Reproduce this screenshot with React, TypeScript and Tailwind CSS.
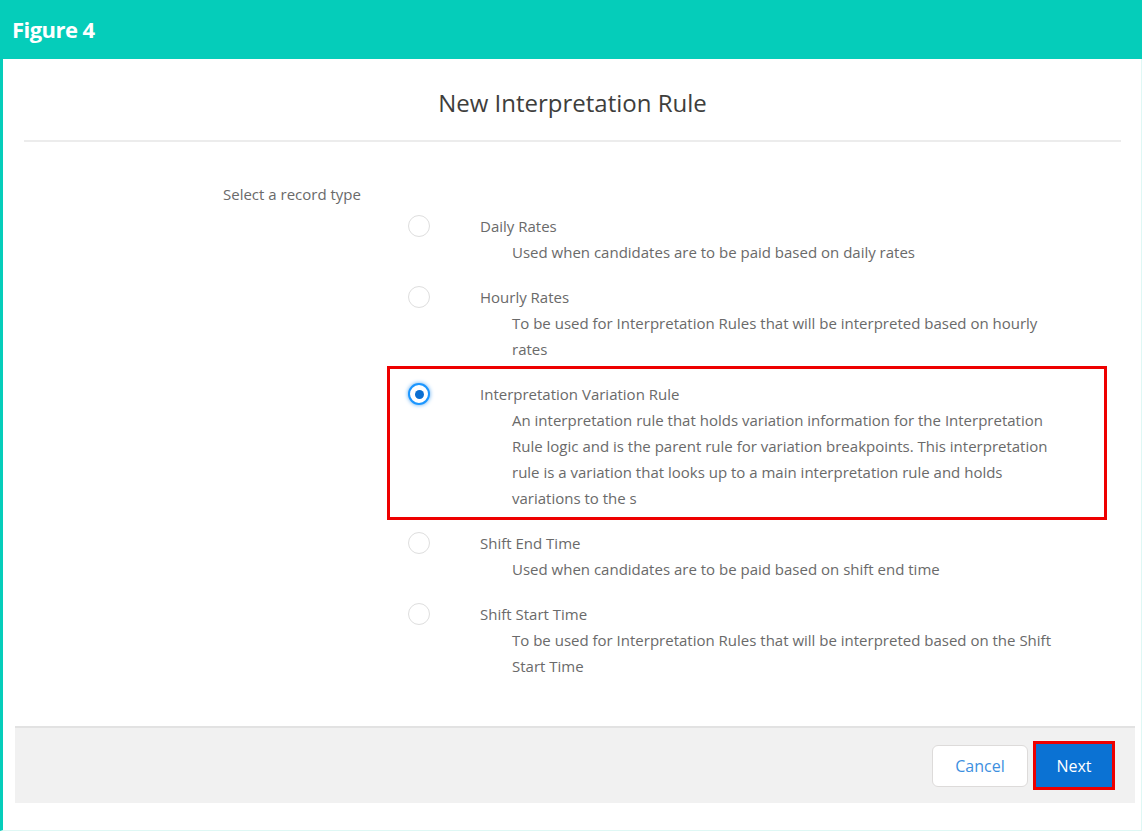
import { useState } from 'react';

type RecordType = {
  id: string;
  label: string;
  lines: string[];
};

const RECORD_TYPES: RecordType[] = [
  {
    id: 'daily',
    label: 'Daily Rates',
    lines: ['Used when candidates are to be paid based on daily rates'],
  },
  {
    id: 'hourly',
    label: 'Hourly Rates',
    lines: [
      'To be used for Interpretation Rules that will be interpreted based on hourly',
      'rates',
    ],
  },
  {
    id: 'variation',
    label: 'Interpretation Variation Rule',
    lines: [
      'An interpretation rule that holds variation information for the Interpretation',
      'Rule logic and is the parent rule for variation breakpoints. This interpretation',
      'rule is a variation that looks up to a main interpretation rule and holds',
      'variations to the s',
    ],
  },
  {
    id: 'shift-end',
    label: 'Shift End Time',
    lines: ['Used when candidates are to be paid based on shift end time'],
  },
  {
    id: 'shift-start',
    label: 'Shift Start Time',
    lines: [
      'To be used for Interpretation Rules that will be interpreted based on the Shift',
      'Start Time',
    ],
  },
];

function Radio({ checked }: { checked: boolean }) {
  if (checked) {
    return (
      <span className="mt-[2px] flex size-[22px] shrink-0 items-center justify-center rounded-full border-2 border-[#1b96ff] bg-white shadow-[0_0_4px_#5aa9f0]">
        <span className="size-[9px] rounded-full bg-[#0b6fd1]" />
      </span>
    );
  }
  return (
    <span className="mt-[2px] block size-[22px] shrink-0 rounded-full border border-[#dedede] bg-white" />
  );
}

export default function App() {
  const [selected, setSelected] = useState('variation');

  return (
    <div className="flex min-h-[831px] w-[1142px] flex-col bg-white font-['Open_Sans',sans-serif]">
      <header className="flex h-[59px] items-center bg-[#05cdba] px-3">
        <h1 className="text-[22px] font-bold tracking-tight text-white">Figure 4</h1>
      </header>

      <div className="flex flex-1 flex-col border-b border-l-[3px] border-r border-b-[#dff8f5] border-l-[#05cdba] border-r-[#dff8f5]">
        <div className="ml-[21px] mr-[20px] border-b-2 border-[#ececec] pb-[21px] pt-[28px] text-center">
          <h2 className="text-[24px] leading-8 text-[#3e3e3c]">New Interpretation Rule</h2>
        </div>

        <div className="pb-[47px] pl-[220px] pt-[42px] text-[15px] text-[#6a6a6a]">
          <p className="leading-5">Select a record type</p>

          <div className="mt-[9px] flex flex-col gap-[19px] pl-[185px]">
            {RECORD_TYPES.map((rt) => (
              <div
                key={rt.id}
                className="relative flex cursor-pointer items-start"
                onClick={() => setSelected(rt.id)}
              >
                <Radio checked={selected === rt.id} />
                <div className="ml-[50px] leading-[26px]">
                  <div>{rt.label}</div>
                  <div className="pl-8">
                    {rt.lines.map((line) => (
                      <div key={line} className="whitespace-nowrap">
                        {line}
                      </div>
                    ))}
                  </div>
                </div>
                {rt.id === 'variation' && (
                  <div className="pointer-events-none absolute -bottom-[9px] -left-[21px] -top-[15px] w-[720px] border-[3px] border-[#ee0000]" />
                )}
              </div>
            ))}
          </div>
        </div>

        <div className="mb-6 ml-3 mr-[6px] flex h-[77px] items-center justify-end gap-[5px] border-t-2 border-[#e2e2e2] bg-[#f1f1f1] pr-5">
          <button className="h-[42px] w-[96px] rounded-md border border-[#dddbda] bg-white text-[16px] text-[#3d8fe0]">
            Cancel
          </button>
          <div className="border-[3px] border-[#ee0000]">
            <button className="h-[43px] w-[76px] bg-[#0b72d3] text-[16px] text-white">Next</button>
          </div>
        </div>
      </div>
    </div>
  );
}
